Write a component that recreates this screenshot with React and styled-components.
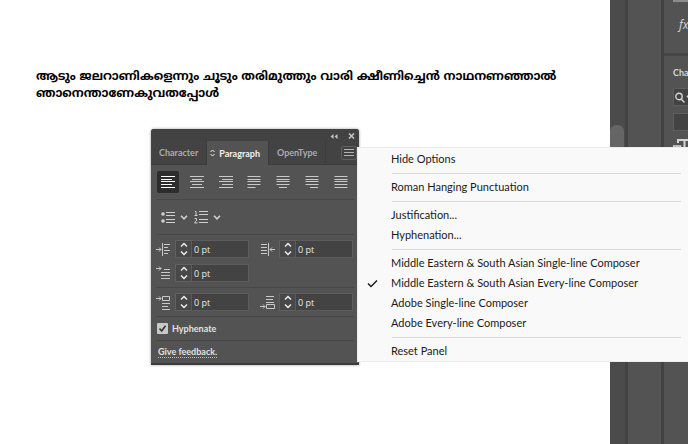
import React from "react";
import styled, { createGlobalStyle } from "styled-components";

const ui = `Lato, "Open Sans", sans-serif`;

const GlobalStyle = createGlobalStyle`
  *, *::before, *::after { box-sizing: border-box; }
  body { margin: 0; background: #fff; font-family: ${ui}; overflow: hidden; }
  button, input { font: inherit; color: inherit; margin: 0; }
  button { background: none; border: 0; padding: 0; }
  svg { display: block; }
`;

const Workspace = styled.div`
  position: relative;
  display: flex;
  height: 100vh;
  overflow: hidden;
`;

const Artboard = styled.main`
  flex: 1;
  min-width: 0;
  padding: 69px 0 0 36px;
  background: #fff;
`;

const Verse = styled.p`
  margin: 0;
  color: #000;
  font: 700 12px/17px "Noto Sans Malayalam", Manjari, "Noto Sans", sans-serif;
  white-space: nowrap;
`;

/* Right-hand dock */

const Dock = styled.aside`
  display: flex;
  flex: none;
  width: 78px;
  background: #535353;
`;

const ScrollTrack = styled.div`
  width: 15px;
  padding-top: 125px;
  background: #4b4b4b;
`;

const ScrollThumb = styled.div`
  width: 14px;
  height: 60px;
  border-radius: 6px;
  background: #656565;
`;

const DockGap = styled.div`
  width: 3px;
  background: #424242;
`;

const IconColumn = styled.div`
  width: 33px;
`;

const SidePanels = styled.div`
  flex: 1;
  min-width: 0;
  overflow: hidden;
  color: #d6d6d6;
`;

const EffectsArea = styled.section`
  height: 56px;
  padding-left: 9px;
  border-bottom: 3px solid #464646;
`;

const Swatch = styled.div`
  width: 30px;
  height: 2px;
  background: #8c8c8c;
`;

const FxButton = styled.button`
  display: block;
  height: 20px;
  margin: 13px 0 0 6px;
  font: italic 12px/20px "Open Sans", sans-serif;
`;

const CharacterArea = styled.section`
  display: flex;
  flex-direction: column;
  gap: 7px;
  padding: 8px 0 0 9px;
`;

const SideTitle = styled.h2`
  height: 17px;
  margin: 0;
  font: 700 9px/17px ${ui};
`;

const SideField = styled.button`
  display: flex;
  align-items: center;
  gap: 1px;
  width: 60px;
  height: 18px;
  padding-left: 1px;
  border: 1px solid #5e5e5e;
  background: #434343;
`;

/* Floating paragraph panel */

const Panel = styled.section`
  position: absolute;
  top: 129px;
  left: 151px;
  width: 208px;
  overflow: hidden;
  border-bottom: 2px solid #3c3c3c;
  border-radius: 3px 3px 0 0;
  background: #535353;
  color: #e2e2e2;
  box-shadow: 0 0 3px rgba(0, 0, 0, 0.4);
  font-size: 9px;
`;

const TitleBar = styled.header`
  display: flex;
  justify-content: flex-end;
  align-items: center;
  gap: 10px;
  height: 12px;
  padding: 2px 4px 0 0;
  background: #424242;
  color: #c4c4c4;
`;

const TabStrip = styled.div`
  display: flex;
  height: 24px;
  border-bottom: 1px solid #3c3c3c;
  background: #434343;
`;

const Tab = styled.button`
  display: flex;
  align-items: center;
  gap: 4px;
  height: ${(p) => (p.$active ? 24 : 23)}px;
  padding: ${(p) => (p.$active ? "0 8px 0 3px" : "0 8px")};
  border-right: 1px solid #3c3c3c;
  background: ${(p) => (p.$active ? "#535353" : "transparent")};
  color: ${(p) => (p.$active ? "#f2f2f2" : "#ababab")};
  font-size: 9px;
  font-weight: 700;
`;

const MenuButton = styled.button`
  display: grid;
  place-items: center;
  width: 16px;
  height: 14px;
  margin: 5px 2px 0 auto;
  border: 1px solid #606060;
  border-radius: 2px;
  color: #b4b4b4;
`;

const Body = styled.div`
  padding: 0 5px;
`;

const Row = styled.div`
  display: flex;
  align-items: center;
  height: ${(p) => p.$height}px;
  gap: ${(p) => p.$gap || 0}px;
  border-top: ${(p) => (p.$rule ? "1px solid #484848" : "0")};
`;

const AlignRow = styled(Row)`
  justify-content: space-between;
  padding: 0 2px 0 1px;
`;

const AlignButton = styled.button`
  display: grid;
  place-items: center;
  width: 22px;
  height: 22px;
  border-radius: 2px;
  background: ${(p) => (p.$active ? "#2d2d2d" : "transparent")};
  color: ${(p) => (p.$active ? "#fff" : "#c9c9c9")};
`;

const ListButton = styled.button`
  display: flex;
  align-items: center;
  gap: 5px;
  color: #d0d0d0;
`;

const Fields = styled.div`
  display: grid;
  grid-template-columns: 93px 93px;
  column-gap: 11px;
  row-gap: 6px;
  padding: 5px 0;
  border-top: 1px solid #484848;
`;

const Field = styled.label`
  display: flex;
  align-items: center;
  height: 18px;
  color: #c9c9c9;
`;

const Stepper = styled.span`
  display: grid;
  place-items: center;
  flex: none;
  width: 16px;
  height: 18px;
  margin-left: 4px;
  border: 1px solid #606060;
  border-right: 0;
  background: #484848;
  color: #eee;
`;

const Value = styled.input`
  flex: 1;
  min-width: 0;
  height: 18px;
  padding: 0 2px;
  border: 1px solid #5c5c5c;
  border-radius: 0;
  background: #434343;
  color: #eaeaea;
  font: 500 9px "Open Sans", sans-serif;
`;

const CheckLabel = styled.label`
  display: flex;
  align-items: center;
  gap: 4px;
  padding-left: 1px;
  font-weight: 700;
`;

const CheckBox = styled.input`
  appearance: none;
  width: 11px;
  height: 11px;
  border-radius: 1px;
  background: #c8c8c8 url("data:image/svg+xml,%3Csvg xmlns='http://www.w3.org/2000/svg' viewBox='0 0 11 11'%3E%3Cpath d='M2.5 5.5l2.2 2.5L8.5 2.8' fill='none' stroke='%23333' stroke-width='1.6'/%3E%3C/svg%3E") center / 11px 11px;
`;

const FeedbackLink = styled.a`
  margin-left: 2px;
  border-bottom: 1px dotted #c0c0c0;
  color: #e2e2e2;
  font-size: 9px;
  font-weight: 700;
  line-height: 11px;
  text-decoration: none;
`;

/* Fly-out menu */

const Menu = styled.div`
  position: absolute;
  top: 147px;
  left: 357px;
  right: 0;
  display: flex;
  flex-direction: column;
  padding: 1px 0 0;
  border: 1px solid #ececec;
  border-width: 1px 0 1px 1px;
  background: #f9f9f9;
  color: #1a1a1a;
`;

const MenuItem = styled.button`
  display: grid;
  grid-template-columns: 28px 1fr;
  align-items: center;
  height: 20px;
  padding-left: 5px;
  font-size: 11px;
  line-height: 20px;
  text-align: left;
  white-space: nowrap;
`;

const MenuMark = styled.span`
  display: block;
  padding-left: 4px;
`;

const Separator = styled.hr`
  width: calc(100% - 41px);
  height: 1px;
  margin: 4px 7px 3px 34px;
  border: 0;
  background: #d9d9d9;
`;

const Stroke = ({ w, h, d, width = 1, children }) => (
  <svg width={w} height={h} viewBox={`0 0 ${w} ${h}`} fill="none" stroke="currentColor" strokeWidth={width} aria-hidden="true">
    <path d={d} />
    {children}
  </svg>
);

const ALIGNMENTS = [
  ["Align left", "M0 .5h14M0 3.5h11M0 5.5h14M0 8.5h11M0 11.5h14"],
  ["Align center", "M0 .5h14M2 3.5h10M0 5.5h14M2 8.5h10M0 11.5h14"],
  ["Align right", "M0 .5h14M3 3.5h11M0 5.5h14M3 8.5h11M0 11.5h14"],
  ["Justify, last line left", "M.5 .5h13M.5 3.5h13M.5 5.5h13M.5 8.5h13M.5 11.5h8"],
  ["Justify, last line centered", "M.5 .5h13M.5 3.5h13M.5 5.5h13M.5 8.5h13M3 11.5h8"],
  ["Justify, last line right", "M.5 .5h13M.5 3.5h13M.5 5.5h13M.5 8.5h13M5 11.5h8"],
  ["Justify all lines", "M.5 .5h13M.5 3.5h13M.5 5.5h13M.5 8.5h13M.5 11.5h13"],
];

const INDENTS = [
  ["Left indent", "M0 7.5h5M3 5.5l2 2-2 2M6.5 1v13M8 2.5h6M8 5.5h4M8 8.5h6M8 11.5h4"],
  ["Right indent", "M1 2.5h6M1 5.5h6M1 8.5h6M1 11.5h6M8.5 1v13M10 7.5h5M12 5.5l-2 2 2 2"],
  ["First line left indent", "M0 2.5h5M3 .5l2 2-2 2M8 3.5h6M5 6.5h9M5 9.5h9M5 12.5h9"],
];

const SPACINGS = [
  ["Space before paragraph", "M0 3.5h5M3 1.5l2 2-2 2M6.5 1.5h7v4h-7zM6 8.5h8M6 11.5h6M6 14.5h8"],
  ["Space after paragraph", "M6 1.5h8M6 4.5h7M6 7.5h8M0 11.5h5M3 9.5l2 2-2 2M6.5 9.5h8v4h-8z"],
];

const MENU = [
  ["Hide Options"],
  ["Roman Hanging Punctuation"],
  ["Justification...", "Hyphenation..."],
  [
    "Middle Eastern & South Asian Single-line Composer",
    "Middle Eastern & South Asian Every-line Composer",
    "Adobe Single-line Composer",
    "Adobe Every-line Composer",
  ],
  ["Reset Panel"],
];
const CHECKED = "Middle Eastern & South Asian Every-line Composer";

const Chevron = () => <Stroke w={8} h={5} d="M1 .8l3 3 3-3" width={1.6} />;

function NumberField({ label, icon }) {
  return (
    <Field>
      <Stroke w={15} h={15} d={icon} />
      <Stepper>
        <Stroke w={8} h={14} d="M1 4.5l3-3 3 3M1 9.5l3 3 3-3" width={1.5} />
      </Stepper>
      <Value aria-label={label} defaultValue="0 pt" />
    </Field>
  );
}

function ParagraphPanel() {
  return (
    <Panel>
      <TitleBar>
        <button aria-label="Collapse">
          <svg width="8" height="5" viewBox="0 0 8 5" fill="currentColor"><path d="M3.5 0v5L.5 2.5zM7.5 0v5l-3-2.5z" /></svg>
        </button>
        <button aria-label="Close">
          <Stroke w={7} h={6} d="M1 .5l5 5M6 .5l-5 5" width={1.6} />
        </button>
      </TitleBar>
      <TabStrip role="tablist">
        <Tab role="tab">Character</Tab>
        <Tab role="tab" $active aria-selected="true">
          <Stroke w={5} h={8} d="M.5 3l2-2 2 2M.5 5l2 2 2-2" />
          Paragraph
        </Tab>
        <Tab role="tab">OpenType</Tab>
        <MenuButton aria-label="Panel menu">
          <Stroke w={10} h={8} d="M0 .5h10M0 3.5h10M0 6.5h10" />
        </MenuButton>
      </TabStrip>
      <Body>
        <AlignRow $height={34}>
          {ALIGNMENTS.map(([label, d], i) => (
            <AlignButton key={label} aria-label={label} $active={i === 0}>
              <Stroke w={14} h={12} d={d} />
            </AlignButton>
          ))}
        </AlignRow>
        <Row $height={35} $gap={6} $rule>
          <ListButton aria-label="Bullets">
            <svg width="19" height="13" viewBox="0 0 19 13" stroke="currentColor" fill="currentColor">
              <circle cx="7" cy="3" r="1.8" stroke="none" />
              <circle cx="7" cy="10" r="1.8" stroke="none" />
              <path d="M10 1.5h9M10 4.5h9M10 8.5h9M10 11.5h9" />
            </svg>
            <Chevron />
          </ListButton>
          <ListButton aria-label="Numbering">
            <Stroke w={14} h={14} d="M1 1.5h1v4M.5 5.5h3M.5 8.5h2v2l-2 2.5h3M5 1.5h9M5 4.5h9M5 9.5h9M5 12.5h9" />
            <Chevron />
          </ListButton>
        </Row>
        <Fields>
          {INDENTS.map(([label, icon]) => <NumberField key={label} label={label} icon={icon} />)}
        </Fields>
        <Fields>
          {SPACINGS.map(([label, icon]) => <NumberField key={label} label={label} icon={icon} />)}
        </Fields>
        <Row $height={24} $rule>
          <CheckLabel><CheckBox type="checkbox" defaultChecked />Hyphenate</CheckLabel>
        </Row>
        <Row $height={23} $rule>
          <FeedbackLink href="#feedback">Give feedback.</FeedbackLink>
        </Row>
      </Body>
    </Panel>
  );
}

function PanelMenu() {
  return (
    <Menu role="menu">
      {MENU.map((group, i) => (
        <React.Fragment key={group[0]}>
          {i > 0 && <Separator />}
          {group.map((name) => (
            <MenuItem key={name} role="menuitem">
              <MenuMark>
                {name === CHECKED && <Stroke w={11} h={9} d="M1 4.5l3 3 6-6" width={1.5} />}
              </MenuMark>
              {name}
            </MenuItem>
          ))}
        </React.Fragment>
      ))}
    </Menu>
  );
}

export default function App() {
  return (
    <Workspace>
      <GlobalStyle />
      <Artboard>
        <Verse lang="ml">
          ആടും ജലറാണികളെന്നും ചൂടും തരിമുത്തും വാരി ക്ഷീണിച്ചെൻ നാഥനണഞ്ഞാൽ<br />
          ഞാനെന്താണേകുവതപ്പോൾ
        </Verse>
      </Artboard>
      <Dock>
        <ScrollTrack><ScrollThumb /></ScrollTrack>
        <DockGap />
        <IconColumn />
        <DockGap />
        <SidePanels>
          <EffectsArea>
            <Swatch />
            <FxButton>fx</FxButton>
          </EffectsArea>
          <CharacterArea>
            <SideTitle>Cha</SideTitle>
            <SideField aria-label="Search fonts">
              <Stroke w={10} h={11} d="M6 7l3.500 3.500" width={1.4}><circle cx="4" cy="4.500" r="3.200" /></Stroke>
              <Chevron />
            </SideField>
            <SideField aria-label="Font style" />
            <svg width="24" height="15" viewBox="0 0 24 15" fill="none" stroke="currentColor">
              <path d="M5 5V2h13v3M11.500 2v12M8 13.500h7" strokeWidth="2" />
              <path d="M.5 10V8h7v2M4 8v6" strokeWidth="1.500" />
            </svg>
          </CharacterArea>
        </SidePanels>
      </Dock>
      <ParagraphPanel />
      <PanelMenu />
    </Workspace>
  );
}
